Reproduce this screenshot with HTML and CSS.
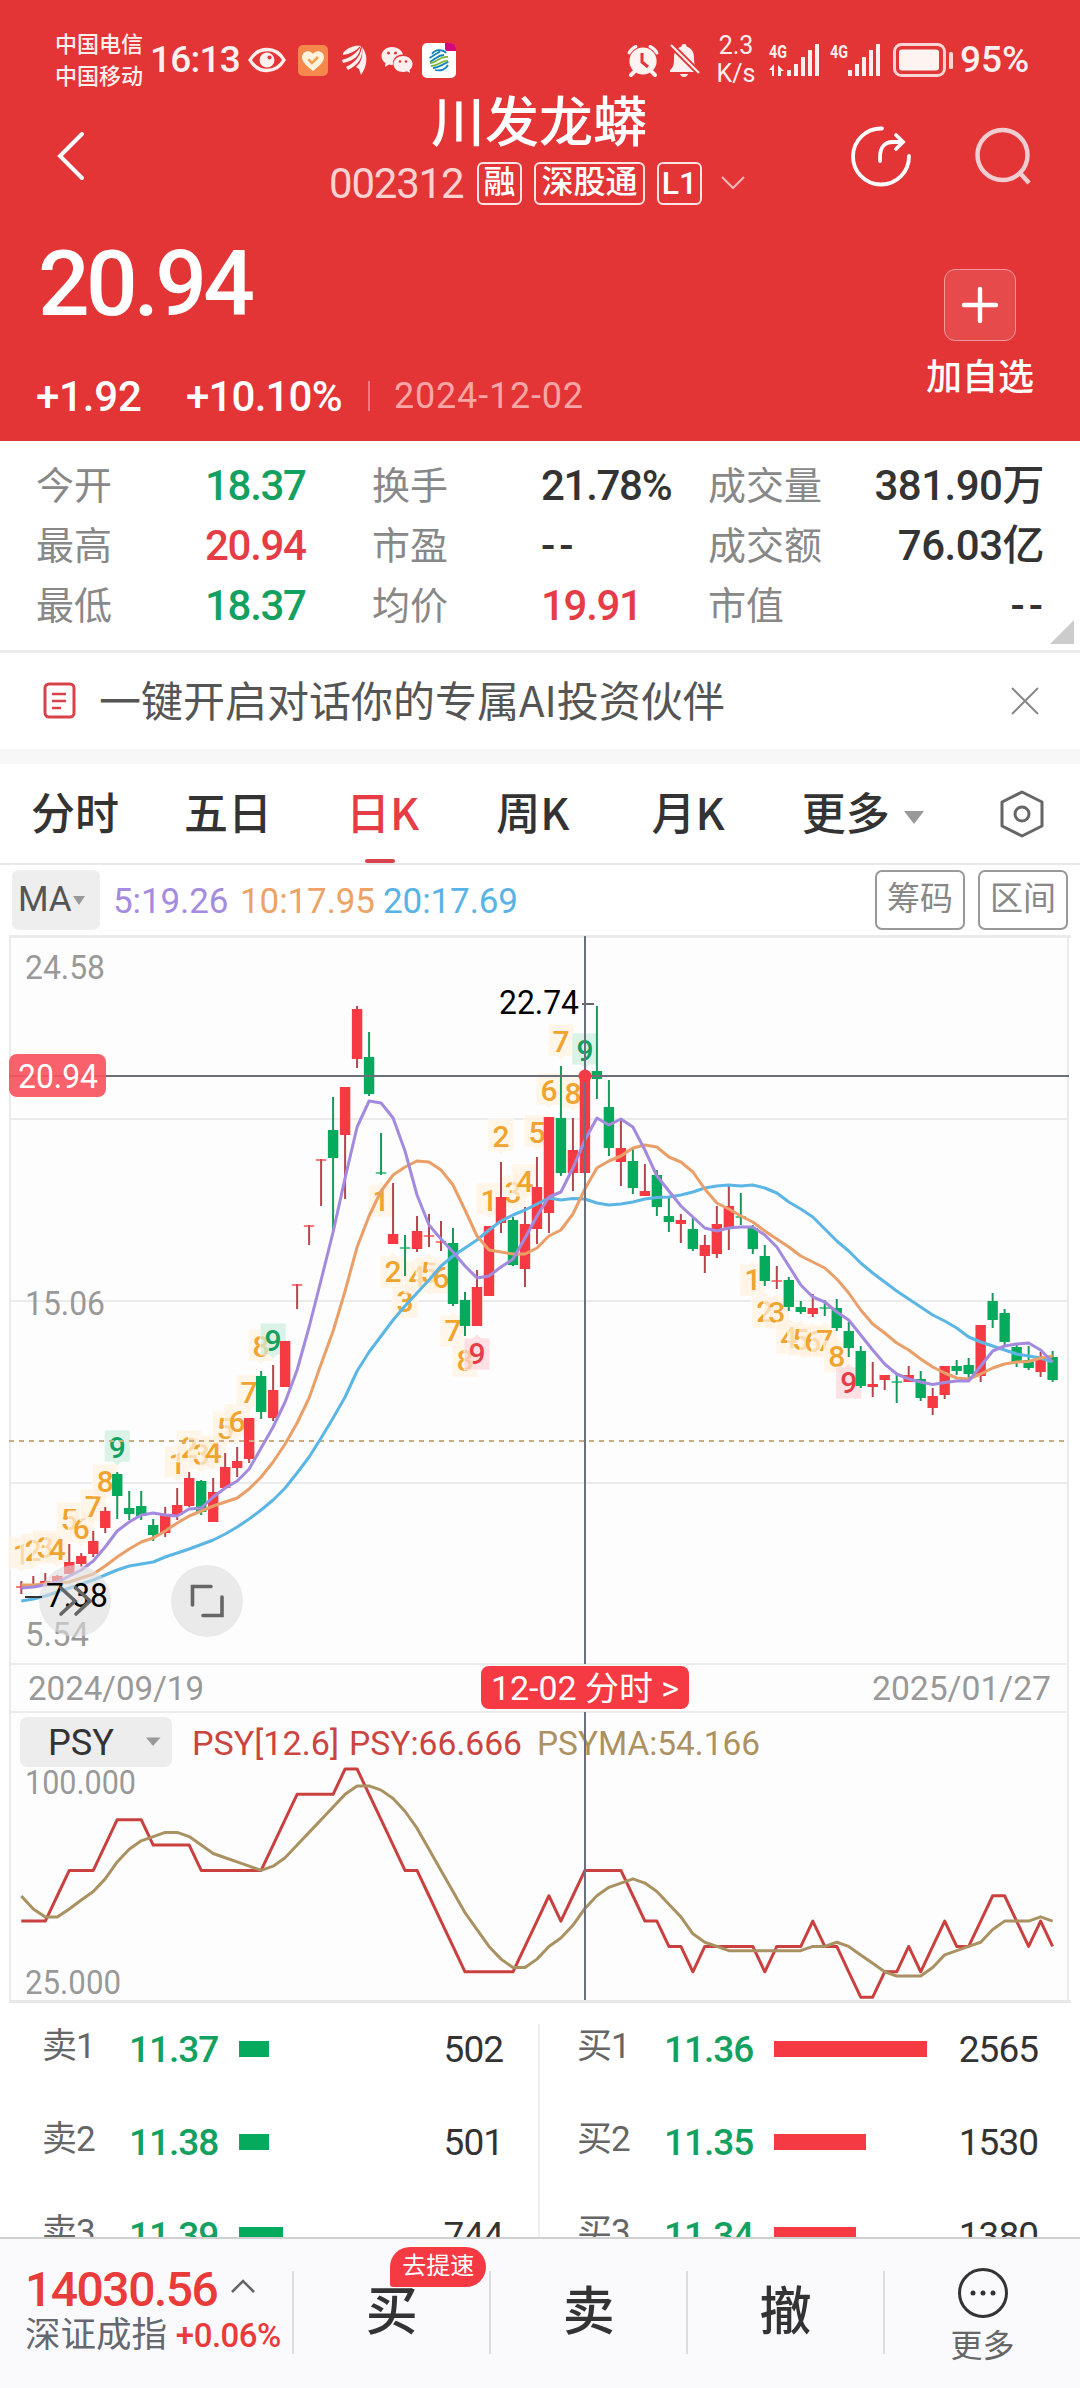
FILE: index.html
```html
<!DOCTYPE html>
<html lang="zh-CN">
<head>
<meta charset="UTF-8">
<title>川发龙蟒 002312</title>
<link rel="stylesheet" href="styles.css">
</head>
<body>
<div class="app">
    <div class="header">
        <div class="status">
            <div class="carrier"><span>中国电信</span><span>中国移动</span></div>
            <span class="clock">16:13</span>
            <svg class="st-eye" width="38" height="26" viewBox="0 0 38 26"><path d="M2 13C10-1 28-1 36 13C28 27 10 27 2 13Z" fill="none" stroke="#fff0ef" stroke-width="3.4"/><circle cx="19" cy="13" r="7.5" fill="#fff0ef"/><circle cx="21.5" cy="10.5" r="2" fill="#e33436"/></svg>
            <svg class="st-heart" width="30" height="31" viewBox="0 0 30 31"><rect width="30" height="31" rx="5" fill="#f5894b"/><path d="M15 26C7 20 4 16 4 12C4 6 12 4 15 9C18 4 26 6 26 12C26 16 23 20 15 26Z" fill="#fff3dd"/><path d="M10.5 14.5L14 18L20 12" fill="none" stroke="#f0a050" stroke-width="2.5"/></svg>
            <svg class="st-wing" width="26" height="30" viewBox="0 0 26 30" fill="#fff0ef"><path d="M1 8C6 2 13 0 19 1C14 6 8 9 1 10Z"/><path d="M0 15C8 13 15 8 19 1C19 10 12 16 1 18Z"/><path d="M4 22C13 18 18 11 19.500 2C22 12 16 20 6 25Z"/><path d="M14 22C20 17 21 10 20 2C26 10 26 20 19 30L17 24Z"/><path d="M0 12.500C8 10.500 14 7 18 2M2 20.500C12 17 18 11 19 3" fill="none" stroke="#e33436" stroke-width="1.200"/></svg>
            <svg class="st-wechat" width="32" height="28" viewBox="0 0 32 28"><path d="M11 1C5 1 .5 5 .5 10C.5 13 2 15.500 4.500 17L4 21L8 18.500C9 19 11 19 12 18.800C11 12 17 8 22 8.500C21 4 16 1 11 1Z" fill="#fff0ef"/><path d="M22 10C17 10 12.500 13.500 12.500 18C12.500 23 17 26 22 26C23.500 26 25 25.600 26 25.200L29 27L28.500 24C30.500 22.500 31.500 20.500 31.500 18C31.500 13.500 27 10 22 10Z" fill="#fff0ef"/><g fill="#e33436"><circle cx="7.500" cy="7" r="1.500"/><circle cx="14.500" cy="7" r="1.500"/><circle cx="19" cy="15.500" r="1.300"/><circle cx="25" cy="15.500" r="1.300"/></g></svg>
            <svg class="st-cmcc" width="34" height="35" viewBox="0 0 34 35"><rect width="34" height="35" rx="5" fill="#fff"/><path d="M23 0H29Q34 0 34 5V8H25Q23 8 23 6Z" fill="#d6087b"/><g fill="none" stroke-width="1.8"><path d="M10 11C13 6 21 6 24 10M7.500 15L18 8.500M8 19L14 15Q18 12 22 12" stroke="#1484b8"/><path d="M8 20C14 20 18 13 26 14M9 23C16 23 20 17 26 18" stroke="#7cb83c"/><path d="M11 25C16 25 21 21 26.500 19M13 27C19 28.500 24 26 26 22" stroke="#1484b8"/></g></svg>
            <svg class="st-alarm" width="32" height="33" viewBox="0 0 32 33"><circle cx="16" cy="17" r="13.600" fill="#fff3f2"/><path d="M2 9A14 14 0 0 1 9 2.500M30 9A14 14 0 0 0 23 2.500" fill="none" stroke="#fff3f2" stroke-width="3" stroke-linecap="round"/><path d="M7 28L4 31M25 28L28 31" stroke="#fff3f2" stroke-width="4" stroke-linecap="round"/><path d="M15 9V18L21 23" fill="none" stroke="#e33436" stroke-width="3"/></svg>
            <svg class="st-bell" width="31" height="35" viewBox="0 0 31 35"><path d="M15 1C17 1 17.500 2 17.500 3.500C23 5 25 10 25 14C25 21 26 24 29 27V29H1V27C5 24 5 20 5 14C5 9 8 5 12.500 3.500C12.500 2 13 1 15 1ZM11 31H19C18 35 12 35 11 31Z" fill="#fff0ef"/><path d="M0 0L31 31" stroke="#e33436" stroke-width="6"/><path d="M2 2L30 30" stroke="#fff0ef" stroke-width="2.200"/></svg>
            <div class="speed"><span>2.3</span><span>K/s</span></div>
            <svg class="st-signal" width="51" height="34" viewBox="0 0 51 34" fill="#fff0ef"><text x="0" y="15" font-size="19" font-weight="700" textLength="18" lengthAdjust="spacingAndGlyphs">4G</text><path d="M5 22V33H3V27H0L5 21ZM9 22L15 28H12V33H9Z"/><rect x="18" y="27" width="4" height="6"/><rect x="25" y="21" width="4" height="12"/><rect x="32" y="14" width="4" height="19"/><rect x="39" y="7" width="4" height="26"/><rect x="46" y="1" width="4" height="32"/></svg>
            <svg class="st-signal2" width="51" height="34" viewBox="0 0 51 34" fill="#fff0ef"><text x="0" y="15" font-size="19" font-weight="700" textLength="18" lengthAdjust="spacingAndGlyphs">4G</text><rect x="18" y="27" width="4" height="6"/><rect x="25" y="21" width="4" height="12"/><rect x="32" y="14" width="4" height="19"/><rect x="39" y="7" width="4" height="26"/><rect x="46" y="1" width="4" height="32"/></svg>
            <svg class="st-battery" width="61" height="34" viewBox="0 0 61 34"><rect x="1.500" y="1.500" width="50" height="31" rx="7" fill="none" stroke="#fbd5d4" stroke-width="3"/><rect x="6" y="6.500" width="40" height="21" rx="3" fill="#fff3f2"/><rect x="56" y="9" width="4" height="17" rx="1.500" fill="#fbd5d4"/></svg>
            <span class="clock">95%</span>
        </div>

        <div class="nav">
            <svg class="back" width="30" height="52" viewBox="0 0 30 52"><path d="M26 4L4 26L26 48" fill="none" stroke="#fff" stroke-width="4" stroke-linecap="round"/></svg>
            <div class="title">
                <h1>川发龙蟒</h1>
                <div class="subtitle">
                    <span class="code">002312</span>
                    <span class="tag">融</span>
                    <span class="tag tag-wide">深股通</span>
                    <span class="tag tag-l1">L1</span>
                    <svg class="chev" width="26" height="16" viewBox="0 0 26 16"><path d="M2 2L13 13L24 2" fill="none" stroke="#f7b5b5" stroke-width="2.200"/></svg>
                </div>
            </div>
            <div class="actions">
                <svg width="62" height="62" viewBox="0 0 62 62" fill="none" stroke="#fff" stroke-width="3.800" stroke-linecap="round"><path d="M32 3.500A28 28 0 1 0 59 31"/><path d="M30 36V32C30 22 35 17 43 17H52M46 10L53 17L46 24"/></svg>
                <svg width="58" height="62" viewBox="0 0 58 62" fill="none" stroke="#efcdd0" stroke-width="4.500"><circle cx="28.500" cy="30" r="25"/><path d="M46 48L55 58"/></svg>
            </div>
        </div>

        <div class="quote">
            <div>
                <div class="price">20.94</div>
                <div class="change">
                    <span class="diff">+1.92</span>
                    <span class="pct">+10.10%</span>
                    <span class="date">2024-12-02</span>
                </div>
            </div>
            <div class="add">
                <div class="add-btn"><svg width="38" height="38" viewBox="0 0 38 38"><path d="M19 3V35M3 19H35" stroke="#fff" stroke-width="4.400" stroke-linecap="round"/></svg></div>
                <span>加自选</span>
            </div>
        </div>
    </div>

    <div class="stats">
        <span class="k">今开</span><span class="v green">18.37</span><span class="k">换手</span><span class="v">21.78%</span><span class="k">成交量</span><span class="v right">381.90万</span>
        <span class="k">最高</span><span class="v red">20.94</span><span class="k">市盈</span><span class="v dash">--</span><span class="k">成交额</span><span class="v right">76.03亿</span>
        <span class="k">最低</span><span class="v green">18.37</span><span class="k">均价</span><span class="v red">19.91</span><span class="k">市值</span><span class="v right dash">--</span>
        <i class="corner"></i>
    </div>

    <div class="notice">
        <svg width="34" height="38" viewBox="0 0 34 38" fill="none" stroke="#d8434b"><rect x="2" y="2" width="29" height="33" rx="4" stroke-width="3"/><path d="M9 12H23M9 19H23M9 26H18" stroke-width="2.600"/></svg>
        <span>一键开启对话你的专属AI投资伙伴</span>
        <svg class="close" width="28" height="28" viewBox="0 0 28 28"><path d="M1 1L27 27M27 1L1 27" stroke="#888" stroke-width="2"/></svg>
    </div>

    <div class="tabs">
        <span class="tab">分时</span>
        <span class="tab">五日</span>
        <span class="tab active">日K</span>
        <span class="tab">周K</span>
        <span class="tab">月K</span>
        <span class="tab">更多<i class="caret"></i></span>
        <svg class="hex" width="44" height="48" viewBox="0 0 44 48" fill="none" stroke="#666" stroke-width="3"><path d="M22 2L42 12V36L22 46L2 36V12Z" stroke-linejoin="round"/><circle cx="22" cy="24" r="7"/></svg>
    </div>

    <div class="ma-row">
        <span class="ma-btn">MA<i class="caret"></i></span>
        <span class="ma5">5:19.26</span>
        <span class="ma10">10:17.95</span>
        <span class="ma20">20:17.69</span>
        <span class="box-btn">筹码</span>
        <span class="box-btn">区间</span>
    </div>

    <!-- k-line, date axis and PSY panel share one x axis -->
    <svg id="chart" class="chart" width="1080" height="1068" viewBox="0 935 1080 1068"></svg>

    <div class="book">
        <div class="side" id="sell"></div>
        <div class="side" id="buy"></div>
    </div>

    <div class="bottom">
        <div class="index">
            <div class="idx-value">14030.56 <svg width="26" height="16" viewBox="0 0 26 16"><path d="M2 14L13 3L24 14" fill="none" stroke="#666" stroke-width="2.600"/></svg></div>
            <div class="idx-name">深证成指 <b>+0.06%</b></div>
        </div>
        <div class="trade">买<span class="tip">去提速</span></div>
        <div class="trade">卖</div>
        <div class="trade">撤</div>
        <div class="more">
            <svg width="52" height="52" viewBox="0 0 52 52"><circle cx="26" cy="26" r="23.500" fill="none" stroke="#333" stroke-width="3"/><g fill="#333"><circle cx="16" cy="26" r="2.500"/><circle cx="26" cy="26" r="2.500"/><circle cx="36" cy="26" r="2.500"/></g></svg>
            <span>更多</span>
        </div>
    </div>
</div>
<script src="chart.js"></script>
</body>
</html>
```
FILE: styles.css
```css
body {
    margin: 0;
    background: #fff;
    color: #333;
    font-family: Roboto, "Noto Sans CJK SC", sans-serif;
}
.app {
    width: 1080px;
    height: 2388px;
    display: flex;
    flex-direction: column;
    overflow: hidden;
}
svg {
    display: block;
    flex: none;
    overflow: visible;
}
.green { color: #12a160; }
.red { color: #e63c46; }

/* header */
.header {
    height: 441px;
    background: #e33436;
    color: #fff;
    flex: none;
}
.status {
    height: 60px;
    padding: 30px 0 0 55px;
    display: flex;
    align-items: center;
    color: #fff0ef;
    white-space: nowrap;
}
.carrier {
    display: flex;
    flex-direction: column;
    width: 95px;
    font-size: 22px;
    font-weight: 500;
    line-height: 32px;
    padding-top: 2px;
}
.clock {
    font-size: 37px;
    font-weight: 500;
    line-height: 60px;
    letter-spacing: -0.8px;
    width: 98px;
}
.clock:last-child { width: auto; letter-spacing: 0; }
.st-heart { margin-left: 12px; }
.st-wing { margin-left: 14px; }
.st-wechat { margin-left: 13px; }
.st-cmcc { margin-left: 9px; }
.st-alarm { margin-left: 171px; }
.st-bell { margin-left: 10px; }
.speed {
    display: flex;
    flex-direction: column;
    align-items: center;
    width: 38px;
    margin-left: 17px;
    font-size: 25px;
    line-height: 28px;
}
.st-signal { margin-left: 14px; }
.st-signal2 { margin-left: 10px; }
.st-battery { margin-left: 12px; margin-right: 6px; }

.nav {
    height: 132px;
    display: grid;
    grid-template-columns: 1fr 416px 1fr;
    align-items: center;
}
.back { margin-left: 56px; }
.title {
    align-self: start;
    margin-left: -3px;
}
.title h1 {
    margin: 0;
    padding: 4px 0 0 1px;
    font-size: 54px;
    font-weight: 500;
    line-height: 60px;
    text-align: center;
}
.subtitle {
    margin-top: 8px;
    height: 42px;
    display: flex;
    align-items: center;
}
.code {
    font-size: 42px;
    letter-spacing: -1.2px;
    width: 148px;
    color: #ffd2d2;
}
.tag {
    box-sizing: border-box;
    width: 45px;
    height: 43px;
    border: 2px solid #ffe4e4;
    border-radius: 6px;
    font-size: 32px;
    font-weight: 500;
    line-height: 36px;
    text-align: center;
    margin-right: 12px;
    flex: none;
}
.tag-wide { width: 111px; }
.tag-l1 { line-height: 39px; }
.chev { margin-left: 6px; }
.actions {
    display: flex;
    justify-content: flex-end;
    align-items: center;
    gap: 62px;
    margin-right: 48px;
}
.quote {
    display: flex;
    justify-content: space-between;
}
.price {
    font-size: 91px;
    font-weight: 500;
    line-height: 90px;
    letter-spacing: -3.8px;
    padding: 17px 0 0 38px;
}
.change {
    display: flex;
    align-items: center;
    height: 60px;
    margin-top: 37px;
    padding-left: 36px;
    white-space: nowrap;
}
.diff {
    font-size: 42px;
    font-weight: 500;
    width: 150px;
    letter-spacing: -0.2px;
}
.pct {
    font-size: 42px;
    font-weight: 500;
    letter-spacing: -0.8px;
    width: 182px;
}
.date {
    font-size: 36px;
    color: #f9a5a5;
    border-left: 2px solid #ee7b7c;
    line-height: 30px;
    padding-left: 24px;
    letter-spacing: 0.8px;
}
.add {
    width: 108px;
    margin: 47px 46px 0 0;
    display: flex;
    flex-direction: column;
    align-items: center;
    font-size: 36px;
    font-weight: 500;
    line-height: 50px;
    white-space: nowrap;
}
.add-btn {
    box-sizing: border-box;
    width: 72px;
    height: 72px;
    border: 1px solid #f29a9b;
    border-radius: 11px;
    background: #e64a4b;
    display: flex;
    align-items: center;
    justify-content: center;
    margin-bottom: 12px;
}

/* key figures */
.stats {
    position: relative;
    box-sizing: border-box;
    height: 212px;
    padding: 15px 37px 0 36px;
    border-bottom: 3px solid #ececec;
    display: grid;
    grid-template-columns: 169px 167px 169px 167px 130px 1fr;
    grid-auto-rows: 60px;
    align-items: center;
    flex: none;
    white-space: nowrap;
}
.k {
    font-size: 38px;
    line-height: 60px;
    color: #888;
}
.v {
    font-size: 42px;
    font-weight: 500;
    line-height: 60px;
    letter-spacing: -1.3px;
}
.v.right {
    text-align: right;
    letter-spacing: -0.5px;
    margin-right: -1px;
}
.v.dash, .v.right.dash { letter-spacing: 4px; }
.v.right.dash { margin-right: -4px; }
.corner {
    position: absolute;
    right: 6px;
    bottom: 6px;
    border-style: solid;
    border-width: 0 0 24px 24px;
    border-color: transparent transparent #ccc transparent;
}

.notice {
    height: 96px;
    padding: 0 41px 0 43px;
    border-bottom: 15px solid #f7f7f7;
    display: flex;
    align-items: center;
    font-family: "Noto Sans CJK SC", sans-serif;
    font-size: 42px;
    color: #555;
    flex: none;
}
.notice span {
    margin: -4px 0 0 22px;
    line-height: 60px;
}
.close { margin-left: auto; }

.tabs {
    box-sizing: border-box;
    height: 101px;
    border-bottom: 2px solid #e8e8e8;
    padding: 0 36px 0 31px;
    display: flex;
    align-items: center;
    font-family: "Noto Sans CJK SC", sans-serif;
    font-size: 44px;
    font-weight: 500;
    line-height: 95px;
    flex: none;
}
.tab { position: relative; margin: -4px 65px 0 0; }
.tab:nth-child(2) { margin-right: 74px; }
.tab:nth-child(3) { margin-right: 77px; }
.tab:nth-child(4) { margin-right: 82px; }
.tab:nth-child(5) { margin-right: 77px; }
.tab:nth-child(6) { margin-right: 0; }
.active { color: #e63c46; }
.active::after {
    content: "";
    position: absolute;
    left: 19px;
    bottom: -4px;
    width: 30px;
    height: 4px;
    border-radius: 2px;
    background: #d8434b;
}
.caret {
    display: inline-block;
    border: 10px solid transparent;
    border-top: 13px solid #999;
    border-bottom: 0;
    margin-left: 14px;
    vertical-align: 6px;
}
.hex { margin-left: auto; }

.ma-row {
    height: 70px;
    padding: 0 12px;
    display: flex;
    align-items: center;
    font-size: 35px;
    letter-spacing: -0.1px;
    white-space: nowrap;
    flex: none;
}
.ma-btn {
    box-sizing: border-box;
    width: 88px;
    height: 60px;
    padding-left: 6px;
    margin-right: 13px;
    border-radius: 7px;
    background: #eee;
    color: #555;
    line-height: 60px;
}
.ma-btn .caret {
    border-width: 9px 6.5px 0;
    margin-left: 1px;
}
.ma5 { color: #a48be0; width: 127px; padding-top: 3px; }
.ma10 { color: #eda268; width: 143px; padding-top: 3px; }
.ma20 { color: #58b4e6; margin-right: auto; padding-top: 3px; }
.box-btn {
    box-sizing: border-box;
    width: 90px;
    height: 60px;
    border: 2px solid #999;
    border-radius: 7px;
    color: #888;
    font-size: 33px;
    line-height: 54px;
    text-align: center;
    margin-left: 13px;
}

.chart { font-family: Roboto, "Noto Sans CJK SC", sans-serif; }

/* order book */
.book {
    flex: 1;
    min-height: 0;
    overflow: hidden;
    display: flex;
    margin-top: 21px;
}
.side {
    width: 50%;
    box-sizing: border-box;
    padding-left: 42px;
    white-space: nowrap;
}
.side:first-child {
    border-right: 2px solid #f0f0f0;
    padding-right: 35px;
}
.side:last-child {
    padding-left: 37px;
    padding-right: 42px;
}
.level {
    display: flex;
    align-items: center;
    height: 50px;
    margin-bottom: 43px;
    font-size: 37px;
    letter-spacing: -1px;
}
.level .name { width: 87px; font-size: 35px; line-height: 46px; margin-top: -4px; color: #666; }
.level .px { width: 110px; color: #12a160; font-weight: 500; }
.level .bar { height: 16px; background: #06aa5c; }
.level .bar.buy { background: #f63a43; }
.level .vol { margin-left: auto; }

/* trade bar */
.bottom {
    box-sizing: border-box;
    height: 151px;
    flex: none;
    background: #fafafc;
    border-top: 2px solid #d0d0d0;
    display: flex;
}
.index {
    width: 293px;
    padding: 22px 0 0 25px;
    box-sizing: border-box;
    white-space: nowrap;
}
.idx-value {
    display: flex;
    align-items: center;
    gap: 13px;
    font-size: 48px;
    font-weight: 500;
    line-height: 58px;
    letter-spacing: -1.5px;
    color: #ea3b3b;
    height: 58px;
}
.idx-value svg { margin-top: -9px; }
.idx-name {
    font-size: 35.5px;
    line-height: 34px;
    color: #666870;
    margin-top: -1px;
}
.idx-name b {
    font-size: 33px;
    font-weight: 500;
    letter-spacing: -0.5px;
    color: #ea3b3b;
}
.trade, .more {
    position: relative;
    box-sizing: border-box;
    width: 197.5px;
    height: 83px;
    margin-top: 32px;
    border-left: 2px solid #ddd;
    text-align: center;
    font-size: 52px;
    font-weight: 500;
    line-height: 83px;
}
.tip {
    position: absolute;
    left: 96px;
    top: -24px;
    width: 96px;
    height: 40px;
    border-radius: 20px 20px 20px 3px;
    background: #f63a43;
    color: #fff;
    font-size: 24px;
    font-weight: 400;
    line-height: 38px;
}
.more {
    display: flex;
    flex-direction: column;
    align-items: center;
    font-size: 32px;
    font-weight: 400;
    color: #666;
    line-height: 50px;
}
.more svg { margin: -4px 0 2px; }
```
FILE: chart.js
```javascript
const X0 = 21.3, STEP = 11.992;
const RED = '#f63a43', GREEN = '#06aa5c';
const cx = i => X0 + STEP * i;

// [up/down, high, body top, body bottom, low]
const candles = [
    ['r',1581,1586,1588,1594],['r',1576,1584,1586,1586],['r',1573,1581,1584,1586],['r',1575,1576,1583,1583],
    ['r',1544,1562,1574,1574],['r',1553,1556,1564,1567],['r',1531,1541,1554,1557],['r',1507,1511,1528,1533],
    ['g',1472,1474,1496,1519],['g',1491,1508,1514,1520],['g',1491,1506,1516,1520],['g',1519,1525,1535,1541],
    ['r',1507,1515,1533,1537],['r',1488,1505,1515,1520],['r',1472,1478,1506,1507],['g',1480,1481,1512,1515],
    ['r',1478,1492,1522,1522],['r',1453,1467,1488,1488],['r',1447,1461,1468,1477],['r',1418,1418,1459,1463],
    ['g',1371,1376,1412,1419],['r',1365,1390,1418,1421],['r',1341,1341,1387,1387],['r',1284,1284,1286,1309],
    ['r',1225,1225,1227,1245],['r',1159,1159,1161,1206],['g',1097,1130,1158,1230],['r',1087,1087,1135,1199],
    ['r',1006,1009,1059,1068],['g',1032,1057,1094,1096],['g',1133,1172,1174,1175],['r',1183,1234,1244,1244],
    ['g',1235,1247,1249,1276],['r',1216,1231,1249,1252],['r',1214,1235,1237,1247],['r',1221,1241,1243,1251],
    ['g',1228,1243,1304,1306],['g',1292,1300,1326,1336],['r',1270,1287,1326,1326],['r',1226,1226,1296,1296],
    ['r',1162,1197,1223,1233],['g',1217,1220,1265,1266],['r',1207,1224,1269,1287],['r',1157,1187,1229,1244],
    ['r',1117,1117,1213,1233],['g',1066,1118,1173,1176],['r',1118,1150,1173,1191],['r',1076,1076,1173,1173],
    ['g',1006,1071,1079,1099],['g',1080,1107,1148,1156],['r',1120,1148,1162,1186],['g',1149,1161,1188,1194],
    ['r',1164,1191,1196,1196],['g',1170,1175,1207,1216],['g',1197,1216,1222,1232],['r',1214,1220,1224,1243],
    ['g',1217,1229,1249,1251],['r',1235,1245,1256,1273],['r',1206,1224,1254,1258],['r',1185,1206,1229,1250],
    ['g',1193,1216,1218,1225],['g',1225,1228,1249,1254],['g',1245,1256,1281,1286],['r',1266,1280,1282,1289],
    ['g',1277,1280,1307,1311],['g',1301,1307,1312,1314],['r',1294,1308,1314,1317],['g',1300,1307,1309,1316],
    ['g',1299,1308,1328,1331],['g',1322,1331,1348,1357],['g',1346,1351,1386,1388],['r',1362,1384,1387,1397],
    ['r',1375,1375,1380,1390],['g',1373,1381,1383,1403],['r',1366,1375,1382,1382],['g',1371,1379,1398,1401],
    ['r',1388,1396,1408,1415],['r',1366,1366,1395,1399],['g',1360,1366,1371,1375],['g',1358,1365,1374,1378],
    ['r',1325,1325,1376,1382],['g',1293,1301,1320,1328],['g',1309,1313,1342,1345],['g',1345,1347,1363,1367],
    ['g',1346,1360,1368,1370],['r',1352,1358,1372,1377],['g',1351,1357,1380,1382]
];

const ma5 = [1588,1587,1585,1582,1576,1570,1561,1547,1531,1522,1515,1513,1515,1516,1509,1508,1497,1488,1481,1469,1448,1427,1402,1370,1327,1280,1232,1178,1127,1101,1103,1118,1151,1195,1225,1239,1252,1266,1278,1276,1267,1259,1238,1216,1197,1192,1168,1140,1118,1125,1119,1127,1150,1176,1191,1206,1217,1228,1231,1228,1227,1227,1235,1247,1266,1285,1297,1302,1312,1320,1335,1350,1364,1374,1379,1382,1384.5,1382.5,1381,1381,1366,1351,1346,1344,1343,1350,1362];
const ma10 = [1585,1585,1584,1583,1582,1578,1574,1566,1557,1549,1542,1538,1531,1523,1516,1511,1506,1502,1498,1489,1477,1462,1444,1423,1398,1364,1331,1291,1247,1216,1191,1175,1167,1161,1162,1170,1185,1210,1236,1250,1252,1254,1254,1248,1236,1230,1214,1189,1168,1161,1156,1148,1145,1147,1157,1162,1172,1189,1203,1209,1216,1222,1231,1239,1247,1256,1262,1268,1279,1293,1310,1324,1333,1343,1350,1359,1367,1373,1378,1379,1374,1368,1364,1362,1361.5,1358,1356];
const ma20 = [1601,1599,1596,1592,1588,1584,1580,1575,1570,1566,1564,1562,1557,1553,1549,1544.5,1540,1534,1527,1519,1510,1500,1488,1473,1457,1438,1418,1397,1371,1352,1336,1320,1306,1293,1280,1266,1256,1248,1240,1230,1221,1215,1210,1204,1198,1200,1198.5,1199,1203,1205,1204,1202,1199,1197.5,1197,1195,1192,1188,1186,1185,1186,1185,1188,1193,1202,1209,1217,1229,1241,1251,1263,1273,1282,1291,1299,1307,1315,1321,1328,1337,1342,1346,1350,1354,1356,1358,1362];

// nine-turn marks: [candle index of "1", direction, top of each box]
const turns = [
    [0, 'down', [1537,1533,1530,1532,1502,1511,1489,1464,1430]],
    [13, 'down', [1446,1430,1437,1435,1411,1404,1375,1329,1323]],
    [30, 'up', [1185,1256,1286,1261,1257,1262,1315,1345,1338]],
    [39, 'down', [1183,1119,1175,1164,1115,1073,1024,1076,1033]],
    [61, 'up', [1264,1296,1297,1322,1324,1326,1325,1341,1367]]
];

// PSY steps below 100, one step is 1/12
const psy = [6,6,6,5,4,4,4,3,2,2,2,3,3,3,3,4,4,4,4,4,4,3,2,1,1,1,1,0,0,1,2,3,4,4,5,6,7,8,8,8,8,8,7,6,5,6,5,4,4,4,4,5,6,6,7,7,8,7,7,7,7,7,8,7,7,7,6,7,7,8,9,9,8,8,7,8,7,6,7,7,6,5,5,6,7,6,7];
const psyY = n => 1769 + n * 25.35;
const psyMa = [1896,1909,1917,1917,1909];
for (let i = 5; i < psy.length; i++) {
    psyMa.push(psyY(psy.slice(i - 5, i + 1).reduce((a, b) => a + b) / 6));
}

let out = '';
function line(x1, y1, x2, y2, color, w, extra) {
    out += `<line x1="${x1}" y1="${y1}" x2="${x2}" y2="${y2}" stroke="${color}" stroke-width="${w}" ${extra || ''}/>`;
}
function poly(ys, color, w) {
    const pts = ys.map((y, i) => cx(i).toFixed(1) + ',' + y).join(' ');
    out += `<polyline points="${pts}" fill="none" stroke="${color}" stroke-width="${w}" stroke-linejoin="round"/>`;
}
function text(str, x, y, size, color, len) {
    out += `<text x="${x}" y="${y}" font-size="${size}" fill="${color}" textLength="${len}" lengthAdjust="spacingAndGlyphs">${str}</text>`;
}

// frame and grid
out += '<rect x="10" y="936" width="1058" height="1065" fill="#fdfdfd"/>';
line(9, 936.5, 1071, 936.5, '#ebebeb', 3);
[1119, 1301, 1483, 1664, 1712].forEach(y => line(10, y, 1068, y, '#ebebeb', 2));
line(9, 2001.5, 1071, 2001.5, '#e8e8e8', 3);
line(10, 936, 10, 2001, '#ebebeb', 2);
line(1068, 936, 1068, 2001, '#ebebeb', 2);

turns.forEach(([start, dir, tops]) => tops.forEach((y, n) => {
    const x = cx(start + n), last = n === 8;
    const fill = last ? (dir === 'down' ? '#cdeedd' : '#fdd5d9') : '#fff1e0';
    const color = last ? (dir === 'down' ? '#12a160' : '#e63c46') : '#f0a32e';
    const tip = dir === 'down' ? `M${x - 13} ${y}h26v32h-9l-4 4l-4-4h-9z` : `M${x - 13} ${y}h9l4-4l4 4h9v32h-26z`;
    out += `<path d="${tip}" fill="${fill}" fill-opacity="0.72" stroke="#fff" stroke-opacity="0.7"/>`;
    out += `<text x="${x}" y="${y + (dir === 'down' ? 28 : 26)}" font-size="30" font-weight="500" fill="${color}" text-anchor="middle">${n + 1}</text>`;
}));

candles.forEach(([t, h, top, bot, l], i) => {
    const x = cx(i), flat = bot - top <= 2;
    line(x, h, x, l, t === 'r' ? '#b5454e' : '#159a5b', 2);
    out += `<rect x="${x - 5.2}" y="${top}" width="10.4" height="${bot - top}" fill="${t === 'r' ? RED : GREEN}" ${flat ? 'opacity="0.65"' : ''}/>`;
});

line(9, 1441, 1069, 1441, '#c9ac82', 2, 'stroke-dasharray="5 5"');
poly(ma20, '#5bb5e5', 3);
poly(ma10, '#eb9f68', 3);
poly(ma5, '#a38ade', 3);

// axis labels
text('24.58', 25, 979, 34, '#999', 80);
text('15.06', 25, 1315, 34, '#999', 80);
text('5.54', 25, 1646, 34, '#999', 64);
text('22.74', 499, 1014, 34, '#000', 80);
line(582, 1004, 594, 1004, '#666', 2);

// floating buttons
out += '<circle cx="75" cy="1601" r="36" fill="#ddd" fill-opacity="0.6"/>';
line(25, 1597, 42, 1597, '#333', 2);
text('7.38', 46, 1607, 34, '#000', 62);
out += '<path d="M61 1588L75 1601L61 1614M76 1588L90 1601L76 1614" fill="none" stroke="#666" stroke-width="3.600" stroke-linecap="round"/>';
out += '<circle cx="207" cy="1601" r="36" fill="#eaeaea"/>';
out += '<path d="M192.500 1605V1586.500H211M222 1597V1615.500H203" fill="none" stroke="#666" stroke-width="3.600" stroke-linecap="round"/>';

// dates
text('2024/09/19', 28, 1700, 34, '#999', 176);
text('2025/01/27', 872, 1700, 34, '#999', 179);

// PSY panel
out += '<rect x="20" y="1717" width="152" height="50" rx="7" fill="#ededed"/>';
text('PSY', 48, 1755, 37, '#333', 66);
out += '<path d="M146 1737.500H160.500L153 1746Z" fill="#999"/>';
text('PSY[12.6]', 192, 1755, 34, '#cc4440', 147);
text('PSY:66.666', 349, 1755, 34, '#cc4440', 173);
text('PSYMA:54.166', 537, 1755, 34, '#ad9160', 223);
text('100.000', 25, 1794, 34, '#999', 111);
text('25.000', 25, 1994, 34, '#999', 96);
poly(psy.map(psyY), '#c9403f', 3);
poly(psyMa, '#aa9162', 3);

// crosshair
line(585, 936, 585, 1664, '#6b7080', 2);
line(585, 1712, 585, 2000, '#6b7080', 2);
line(9, 1076, 1069, 1076, '#6b6f76', 2);
out += `<circle cx="585" cy="1076" r="6.500" fill="${RED}"/>`;
out += '<rect x="9" y="1054" width="97" height="43" rx="8" fill="#f9545f" fill-opacity="0.92"/>';
text('20.94', 18, 1088, 34, '#fff', 80);
out += `<rect x="481" y="1666" width="208" height="43" rx="8" fill="${RED}"/>`;
text('12-02 分时 &gt;', 491, 1700, 33, '#fff', 188);

document.getElementById('chart').innerHTML = out;

const book = {
    sell: [['卖1', '11.37', 30, '502'], ['卖2', '11.38', 30, '501'], ['卖3', '11.39', 44, '744']],
    buy: [['买1', '11.36', 153, '2565'], ['买2', '11.35', 92, '1530'], ['买3', '11.34', 82, '1380']]
};
Object.keys(book).forEach(side => {
    document.getElementById(side).innerHTML = book[side].map(([name, px, w, vol]) =>
        `<div class="level"><span class="name">${name}</span><span class="px">${px}</span><span class="bar ${side}" style="width:${w}px"></span><span class="vol">${vol}</span></div>`
    ).join('');
});
```
